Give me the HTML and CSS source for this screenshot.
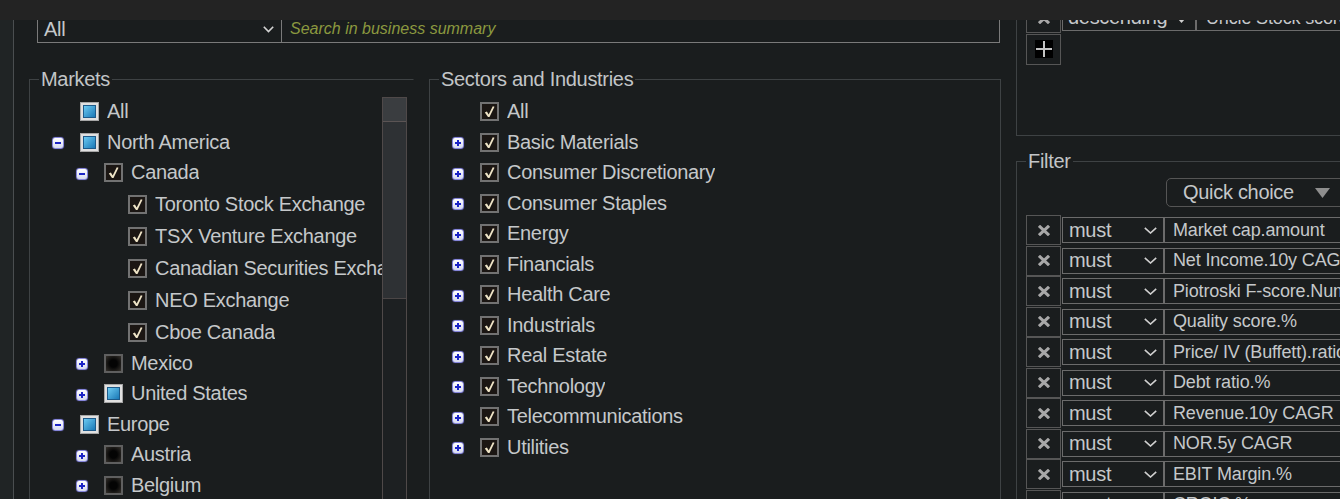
FILE: index.html
```html
<!DOCTYPE html>
<html lang="en">
<head>
<meta charset="utf-8">
<title>Screener</title>
<link rel="stylesheet" href="styles.css">
</head>
<body>
<div class="topbar"></div>
<div class="content">
  <div class="strip"></div>
  <div class="main">
    <div class="searchrow">
      <div class="sel-all"><span>All</span><svg class="chev" width="11" height="7" viewBox="0 0 11 7"><path d="M0.8 0.8 L5.5 5.6 L10.2 0.8" fill="none" stroke="#d4d4d4" stroke-width="1.6"/></svg></div>
      <div class="search"><span class="ph">Search in business summary</span></div>
    </div>
    <div class="panels">
      <fieldset class="box markets">
        <legend>Markets</legend>
        <div class="treewrap">
          <ul class="tree">
            <li class="row"><span class="exp none"></span><span class="cb part"><i class="sq"></i></span><span class="lbl">All</span></li>
            <li class="row"><span class="exp minus"></span><span class="cb part"><i class="sq"></i></span><span class="lbl">North America</span></li>
            <li class="row l1"><span class="exp minus"></span><span class="cb on"><svg viewBox="0 0 15 15"><path d="M2.8 8.4 L4.9 7.6 L6.7 10.4 L10.8 2.2 L12.5 2.8 L7.5 13.1 L6 13.1 Z" fill="#efe4c6"/></svg></span><span class="lbl">Canada</span></li>
            <li class="row l2"><span class="exp none"></span><span class="cb on"><svg viewBox="0 0 15 15"><path d="M2.8 8.4 L4.9 7.6 L6.7 10.4 L10.8 2.2 L12.5 2.8 L7.5 13.1 L6 13.1 Z" fill="#efe4c6"/></svg></span><span class="lbl">Toronto Stock Exchange</span></li>
            <li class="row l2"><span class="exp none"></span><span class="cb on"><svg viewBox="0 0 15 15"><path d="M2.8 8.4 L4.9 7.6 L6.7 10.4 L10.8 2.2 L12.5 2.8 L7.5 13.1 L6 13.1 Z" fill="#efe4c6"/></svg></span><span class="lbl">TSX Venture Exchange</span></li>
            <li class="row l2"><span class="exp none"></span><span class="cb on"><svg viewBox="0 0 15 15"><path d="M2.8 8.4 L4.9 7.6 L6.7 10.4 L10.8 2.2 L12.5 2.8 L7.5 13.1 L6 13.1 Z" fill="#efe4c6"/></svg></span><span class="lbl">Canadian Securities Exchange</span></li>
            <li class="row l2"><span class="exp none"></span><span class="cb on"><svg viewBox="0 0 15 15"><path d="M2.8 8.4 L4.9 7.6 L6.7 10.4 L10.8 2.2 L12.5 2.8 L7.5 13.1 L6 13.1 Z" fill="#efe4c6"/></svg></span><span class="lbl">NEO Exchange</span></li>
            <li class="row l2"><span class="exp none"></span><span class="cb on"><svg viewBox="0 0 15 15"><path d="M2.8 8.4 L4.9 7.6 L6.7 10.4 L10.8 2.2 L12.5 2.8 L7.5 13.1 L6 13.1 Z" fill="#efe4c6"/></svg></span><span class="lbl">Cboe Canada</span></li>
            <li class="row l1"><span class="exp plus"></span><span class="cb off"></span><span class="lbl">Mexico</span></li>
            <li class="row l1"><span class="exp plus"></span><span class="cb part"><i class="sq"></i></span><span class="lbl">United States</span></li>
            <li class="row"><span class="exp minus"></span><span class="cb part"><i class="sq"></i></span><span class="lbl">Europe</span></li>
            <li class="row l1"><span class="exp plus"></span><span class="cb off"></span><span class="lbl">Austria</span></li>
            <li class="row l1"><span class="exp plus"></span><span class="cb off"></span><span class="lbl">Belgium</span></li>
            <li class="row l1"><span class="exp plus"></span><span class="cb off"></span><span class="lbl">Denmark</span></li>
          </ul>
          <div class="sb"><div class="sb-btn"></div><div class="sb-thumb"></div></div>
        </div>
      </fieldset>
      <fieldset class="box sectors">
        <legend>Sectors and Industries</legend>
        <ul class="tree">
          <li class="row"><span class="exp none"></span><span class="cb on"><svg viewBox="0 0 15 15"><path d="M2.8 8.4 L4.9 7.6 L6.7 10.4 L10.8 2.2 L12.5 2.8 L7.5 13.1 L6 13.1 Z" fill="#efe4c6"/></svg></span><span class="lbl">All</span></li>
          <li class="row"><span class="exp plus"></span><span class="cb on"><svg viewBox="0 0 15 15"><path d="M2.8 8.4 L4.9 7.6 L6.7 10.4 L10.8 2.2 L12.5 2.8 L7.5 13.1 L6 13.1 Z" fill="#efe4c6"/></svg></span><span class="lbl">Basic Materials</span></li>
          <li class="row"><span class="exp plus"></span><span class="cb on"><svg viewBox="0 0 15 15"><path d="M2.8 8.4 L4.9 7.6 L6.7 10.4 L10.8 2.2 L12.5 2.8 L7.5 13.1 L6 13.1 Z" fill="#efe4c6"/></svg></span><span class="lbl">Consumer Discretionary</span></li>
          <li class="row"><span class="exp plus"></span><span class="cb on"><svg viewBox="0 0 15 15"><path d="M2.8 8.4 L4.9 7.6 L6.7 10.4 L10.8 2.2 L12.5 2.8 L7.5 13.1 L6 13.1 Z" fill="#efe4c6"/></svg></span><span class="lbl">Consumer Staples</span></li>
          <li class="row"><span class="exp plus"></span><span class="cb on"><svg viewBox="0 0 15 15"><path d="M2.8 8.4 L4.9 7.6 L6.7 10.4 L10.8 2.2 L12.5 2.8 L7.5 13.1 L6 13.1 Z" fill="#efe4c6"/></svg></span><span class="lbl">Energy</span></li>
          <li class="row"><span class="exp plus"></span><span class="cb on"><svg viewBox="0 0 15 15"><path d="M2.8 8.4 L4.9 7.6 L6.7 10.4 L10.8 2.2 L12.5 2.8 L7.5 13.1 L6 13.1 Z" fill="#efe4c6"/></svg></span><span class="lbl">Financials</span></li>
          <li class="row"><span class="exp plus"></span><span class="cb on"><svg viewBox="0 0 15 15"><path d="M2.8 8.4 L4.9 7.6 L6.7 10.4 L10.8 2.2 L12.5 2.8 L7.5 13.1 L6 13.1 Z" fill="#efe4c6"/></svg></span><span class="lbl">Health Care</span></li>
          <li class="row"><span class="exp plus"></span><span class="cb on"><svg viewBox="0 0 15 15"><path d="M2.8 8.4 L4.9 7.6 L6.7 10.4 L10.8 2.2 L12.5 2.8 L7.5 13.1 L6 13.1 Z" fill="#efe4c6"/></svg></span><span class="lbl">Industrials</span></li>
          <li class="row"><span class="exp plus"></span><span class="cb on"><svg viewBox="0 0 15 15"><path d="M2.8 8.4 L4.9 7.6 L6.7 10.4 L10.8 2.2 L12.5 2.8 L7.5 13.1 L6 13.1 Z" fill="#efe4c6"/></svg></span><span class="lbl">Real Estate</span></li>
          <li class="row"><span class="exp plus"></span><span class="cb on"><svg viewBox="0 0 15 15"><path d="M2.8 8.4 L4.9 7.6 L6.7 10.4 L10.8 2.2 L12.5 2.8 L7.5 13.1 L6 13.1 Z" fill="#efe4c6"/></svg></span><span class="lbl">Technology</span></li>
          <li class="row"><span class="exp plus"></span><span class="cb on"><svg viewBox="0 0 15 15"><path d="M2.8 8.4 L4.9 7.6 L6.7 10.4 L10.8 2.2 L12.5 2.8 L7.5 13.1 L6 13.1 Z" fill="#efe4c6"/></svg></span><span class="lbl">Telecommunications</span></li>
          <li class="row"><span class="exp plus"></span><span class="cb on"><svg viewBox="0 0 15 15"><path d="M2.8 8.4 L4.9 7.6 L6.7 10.4 L10.8 2.2 L12.5 2.8 L7.5 13.1 L6 13.1 Z" fill="#efe4c6"/></svg></span><span class="lbl">Utilities</span></li>
        </ul>
      </fieldset>
    </div>
  </div>
  <div class="right">
    <div class="sortbox">
      <div class="frow">
        <div class="xcell"><svg width="12" height="11" viewBox="0 0 12 11"><path d="M1 0.8 L11 10.2 M11 0.8 L1 10.2" stroke="#a8a8a8" stroke-width="3"/></svg></div>
        <div class="fsel desc"><span>descending</span><svg class="tri-s" width="7" height="4" viewBox="0 0 7 4"><path d="M0 0 H7 L3.5 4 Z" fill="#cfcfcf"/></svg></div>
        <div class="finput top">Uncle Stock score</div>
      </div>
      <div class="addbtn"><svg width="18" height="18" viewBox="0 0 18 18"><rect width="18" height="18" fill="#000"/><path d="M9 1 V17 M1 9 H17" stroke="#c4c4c4" stroke-width="2"/></svg></div>
    </div>
    <fieldset class="box filter">
      <legend>Filter</legend>
      <div class="qc"><span>Quick choice</span><svg width="15" height="10" viewBox="0 0 15 10"><path d="M0 0 H15 L7.5 10 Z" fill="#8e8e8e"/></svg></div>
      <div class="frows">
        <div class="frow"><div class="xcell"><svg width="12" height="11" viewBox="0 0 12 11"><path d="M1 0.8 L11 10.2 M11 0.8 L1 10.2" stroke="#a8a8a8" stroke-width="3"/></svg></div><div class="fsel"><span>must</span><svg width="13" height="7" viewBox="0 0 13 7"><path d="M0.8 0.8 L6.5 6 L12.2 0.8" fill="none" stroke="#d0d0d0" stroke-width="1.6"/></svg></div><div class="finput">Market cap.amount</div></div>
        <div class="frow"><div class="xcell"><svg width="12" height="11" viewBox="0 0 12 11"><path d="M1 0.8 L11 10.2 M11 0.8 L1 10.2" stroke="#a8a8a8" stroke-width="3"/></svg></div><div class="fsel"><span>must</span><svg width="13" height="7" viewBox="0 0 13 7"><path d="M0.8 0.8 L6.5 6 L12.2 0.8" fill="none" stroke="#d0d0d0" stroke-width="1.6"/></svg></div><div class="finput">Net Income.10y CAGR</div></div>
        <div class="frow"><div class="xcell"><svg width="12" height="11" viewBox="0 0 12 11"><path d="M1 0.8 L11 10.2 M11 0.8 L1 10.2" stroke="#a8a8a8" stroke-width="3"/></svg></div><div class="fsel"><span>must</span><svg width="13" height="7" viewBox="0 0 13 7"><path d="M0.8 0.8 L6.5 6 L12.2 0.8" fill="none" stroke="#d0d0d0" stroke-width="1.6"/></svg></div><div class="finput">Piotroski F-score.Number</div></div>
        <div class="frow"><div class="xcell"><svg width="12" height="11" viewBox="0 0 12 11"><path d="M1 0.8 L11 10.2 M11 0.8 L1 10.2" stroke="#a8a8a8" stroke-width="3"/></svg></div><div class="fsel"><span>must</span><svg width="13" height="7" viewBox="0 0 13 7"><path d="M0.8 0.8 L6.5 6 L12.2 0.8" fill="none" stroke="#d0d0d0" stroke-width="1.6"/></svg></div><div class="finput">Quality score.%</div></div>
        <div class="frow"><div class="xcell"><svg width="12" height="11" viewBox="0 0 12 11"><path d="M1 0.8 L11 10.2 M11 0.8 L1 10.2" stroke="#a8a8a8" stroke-width="3"/></svg></div><div class="fsel"><span>must</span><svg width="13" height="7" viewBox="0 0 13 7"><path d="M0.8 0.8 L6.5 6 L12.2 0.8" fill="none" stroke="#d0d0d0" stroke-width="1.6"/></svg></div><div class="finput">Price/ IV (Buffett).ratio</div></div>
        <div class="frow"><div class="xcell"><svg width="12" height="11" viewBox="0 0 12 11"><path d="M1 0.8 L11 10.2 M11 0.8 L1 10.2" stroke="#a8a8a8" stroke-width="3"/></svg></div><div class="fsel"><span>must</span><svg width="13" height="7" viewBox="0 0 13 7"><path d="M0.8 0.8 L6.5 6 L12.2 0.8" fill="none" stroke="#d0d0d0" stroke-width="1.6"/></svg></div><div class="finput">Debt ratio.%</div></div>
        <div class="frow"><div class="xcell"><svg width="12" height="11" viewBox="0 0 12 11"><path d="M1 0.8 L11 10.2 M11 0.8 L1 10.2" stroke="#a8a8a8" stroke-width="3"/></svg></div><div class="fsel"><span>must</span><svg width="13" height="7" viewBox="0 0 13 7"><path d="M0.8 0.8 L6.5 6 L12.2 0.8" fill="none" stroke="#d0d0d0" stroke-width="1.6"/></svg></div><div class="finput">Revenue.10y CAGR</div></div>
        <div class="frow"><div class="xcell"><svg width="12" height="11" viewBox="0 0 12 11"><path d="M1 0.8 L11 10.2 M11 0.8 L1 10.2" stroke="#a8a8a8" stroke-width="3"/></svg></div><div class="fsel"><span>must</span><svg width="13" height="7" viewBox="0 0 13 7"><path d="M0.8 0.8 L6.5 6 L12.2 0.8" fill="none" stroke="#d0d0d0" stroke-width="1.6"/></svg></div><div class="finput">NOR.5y CAGR</div></div>
        <div class="frow"><div class="xcell"><svg width="12" height="11" viewBox="0 0 12 11"><path d="M1 0.8 L11 10.2 M11 0.8 L1 10.2" stroke="#a8a8a8" stroke-width="3"/></svg></div><div class="fsel"><span>must</span><svg width="13" height="7" viewBox="0 0 13 7"><path d="M0.8 0.8 L6.5 6 L12.2 0.8" fill="none" stroke="#d0d0d0" stroke-width="1.6"/></svg></div><div class="finput">EBIT Margin.%</div></div>
        <div class="frow"><div class="xcell"><svg width="12" height="11" viewBox="0 0 12 11"><path d="M1 0.8 L11 10.2 M11 0.8 L1 10.2" stroke="#a8a8a8" stroke-width="3"/></svg></div><div class="fsel"><span>must</span><svg width="13" height="7" viewBox="0 0 13 7"><path d="M0.8 0.8 L6.5 6 L12.2 0.8" fill="none" stroke="#d0d0d0" stroke-width="1.6"/></svg></div><div class="finput">CROIC.%</div></div>
      </div>
    </fieldset>
  </div>
</div>
</body>
</html>
```
FILE: styles.css
```css
* { box-sizing: border-box; }
html, body {
  margin: 0;
  padding: 0;
  width: 1340px;
  height: 499px;
  overflow: hidden;
  background: #1a1d1e;
}
body {
  font-family: "Liberation Sans", Arial, sans-serif;
  font-size: 20px;
  letter-spacing: -0.3px;
  color: #c5c8ca;
}
.topbar {
  height: 20px;
  background: #232323;
}
.content {
  display: flex;
  height: 479px;
  overflow: hidden;
}
.strip {
  width: 14px;
  flex: none;
  background: #202425;
  border-right: 1px solid #4a4e50;
}
.main {
  width: 1002px;
  flex: none;
  padding-left: 15px;
}
.searchrow {
  display: flex;
  width: 963px;
  height: 28px;
  margin: -5px 0 0 8px;
}
.sel-all {
  width: 245px;
  flex: none;
  border: 1px solid #7a7a7a;
  display: flex;
  align-items: center;
  justify-content: space-between;
  padding: 0 7px 0 6px;
}
.chev { display: block; }
.search {
  flex: 1;
  border: 1px solid #7a7a7a;
  border-left: none;
  display: flex;
  align-items: center;
  padding-left: 8px;
}
.ph {
  font-style: italic;
  font-size: 16px;
  letter-spacing: 0;
  color: #8b983f;
}
.panels {
  display: flex;
  gap: 15px;
  margin-top: 25px;
}
.box {
  margin: 0;
  min-width: 0;
  border: 1px solid #3e4244;
  padding: 5.5px 6px 0 9px;
  height: 440px;
}
.box legend {
  padding: 0 2px;
  color: #c2c5c7;
}
.markets {
  width: 385px;
  border-right-color: transparent;
}
.sectors { width: 572px; }
.treewrap {
  display: flex;
  height: 420px;
}
.tree {
  flex: 1;
  min-width: 0;
  margin: 0;
  padding: 0;
  list-style: none;
  overflow: hidden;
  white-space: nowrap;
}
.row {
  display: flex;
  align-items: center;
  height: 30.5px;
  padding-left: 12px;
}
.row.l1 { padding-left: 36px; }
.row.l2 { padding-left: 60px; height: 32px; }
.exp {
  width: 12px;
  height: 12px;
  flex: none;
  margin: 2px 16px 0 1px;
  border: 1px solid #8585da;
  border-radius: 3px;
  box-shadow: 0 0 1px #5a5ab0;
}
.exp.none { visibility: hidden; }
.exp.minus {
  background:
    linear-gradient(#1c24c6, #1c24c6) center / 6px 2px no-repeat,
    linear-gradient(#ffffff, #d6daf0);
}
.exp.plus {
  background:
    linear-gradient(#1c24c6, #1c24c6) center / 6px 2px no-repeat,
    linear-gradient(#1c24c6, #1c24c6) center / 2px 6px no-repeat,
    linear-gradient(#ffffff, #d6daf0);
}
.cb {
  width: 19px;
  height: 19px;
  flex: none;
  margin-right: 8px;
  display: block;
}
.cb.on {
  border: 2px solid #727272;
  background: #1b1613;
}
.cb.on svg { display: block; width: 15px; height: 15px; }
.cb.part {
  border: 1px solid #a6a6a6;
  background: #e0e0e0;
  padding: 2px;
}
.sq {
  display: block;
  width: 100%;
  height: 100%;
  border: 1px solid #1d5a8a;
  background: linear-gradient(135deg, #6ccaf2, #1a78b6);
}
.cb.off {
  border: 2px solid #5f5f5f;
  background: radial-gradient(circle, #040404 35%, #35312c 100%);
}
.lbl { overflow: hidden; }
.sb {
  width: 25px;
  flex: none;
  margin-top: 0.5px;
  border: 1px solid #4f4949;
  border-bottom: none;
  background: #1d2022;
}
.sb-btn {
  height: 24px;
  background: #3a3d40;
  border-bottom: 1px solid #5b5454;
}
.sb-thumb {
  height: 177px;
  background: #2e3134;
  border-bottom: 1px solid #4b4646;
}
.right {
  width: 360px;
  flex: none;
}
.sortbox {
  height: 146px;
  margin-top: -30px;
  border: 1px solid #3e4244;
  border-right: none;
  padding: 12px 0 0 9px;
}
.frow {
  display: flex;
  align-items: center;
  height: 30.5px;
}
.xcell {
  width: 35px;
  height: 30px;
  flex: none;
  border: 1px solid #565656;
  display: flex;
  align-items: center;
  justify-content: center;
}
.xcell svg { display: block; }
.fsel {
  width: 102px;
  height: 26px;
  flex: none;
  margin-left: 1px;
  border: 1px solid #6b6b6b;
  display: flex;
  align-items: center;
  justify-content: space-between;
  padding: 0 6px 0 6px;
}
.fsel svg { display: block; }
.fsel.desc {
  width: 134px;
  padding: 0 10px 0 5px;
  margin-top: -1px;
  align-items: flex-end;
  padding-bottom: 1px;
}
.fsel.desc .tri-s { margin-bottom: 6px; }
.finput {
  width: 220px;
  height: 26px;
  flex: none;
  border: 1px solid #6b6b6b;
  padding-left: 8px;
  font-size: 18px;
  letter-spacing: -0.15px;
  white-space: nowrap;
  overflow: hidden;
  display: flex;
  align-items: center;
}
.finput.top { padding-left: 9px; }
.addbtn {
  width: 35px;
  height: 31px;
  border: 1px solid #565656;
  display: flex;
  align-items: center;
  justify-content: center;
}
.addbtn svg { display: block; }
.filter {
  width: 360px;
  height: 400px;
  margin-top: 14px;
  padding: 5px 0 0 9px;
  border-right: none;
}
.qc {
  width: 180px;
  height: 29px;
  margin-left: 140px;
  border: 1px solid #555555;
  border-radius: 5px;
  padding: 0 15px 0 16px;
  display: flex;
  align-items: center;
  justify-content: space-between;
}
.qc svg { display: block; }
.frows { margin-top: 8px; }
```
